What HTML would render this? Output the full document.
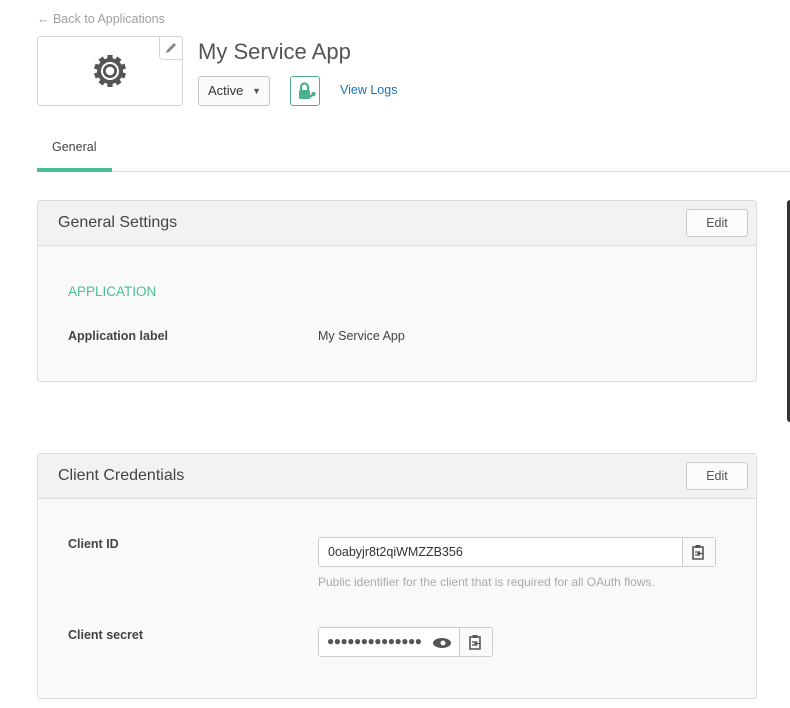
<!DOCTYPE html>
<html><head><meta charset="utf-8"><style>
*{box-sizing:border-box;margin:0;padding:0}
body{width:790px;height:708px;background:#fff;font-family:"Liberation Sans",sans-serif;position:relative;overflow:hidden;color:#3d3d3d}
.a{position:absolute}
.panel{position:absolute;left:37px;width:720px;border:1px solid #dcdcdc;border-radius:3px;background:#f9f9f9}
.ph{height:45px;background:#f2f2f2;border-bottom:1px solid #ddd;position:relative}
.ph h2{position:absolute;left:20px;top:13px;font-size:16px;font-weight:normal;color:#444}
.edit{position:absolute;right:8px;top:8px;width:62px;height:28px;border:1px solid #c8c8c8;border-radius:3px;background:#fbfbfb;font-size:12.5px;color:#555;text-align:center;line-height:26px}
.lbl{position:absolute;left:30px;font-size:12.5px;font-weight:bold;color:#444}
</style></head><body>
<div class="a" style="left:37px;top:12px;font-size:12.5px;color:#a0a0a0">← Back to Applications</div>
<div class="a" style="left:37px;top:36px;width:146px;height:70px;border:1px solid #d6d6d6;border-radius:3px">
 <div class="a" style="right:-1px;top:-1px;width:24px;height:24px;border:1px solid #d6d6d6;border-radius:0 3px 0 4px;background:#fff"></div>
 <svg class="a" style="right:4px;top:4px" width="14" height="14" viewBox="0 0 14 14"><path d="M2 12 L3 9 L10 2 L12 4 L5 11 Z" fill="#888"/></svg>
 <svg class="a" style="left:54px;top:16px" width="36" height="36" viewBox="0 0 36 36">
  <g fill="#555" transform="translate(18,18)">
   <circle r="13"/>
   <g id="t"><rect x="-2.6" y="-16" width="5.2" height="5"/></g>
   <use href="#t" transform="rotate(36)"/><use href="#t" transform="rotate(72)"/><use href="#t" transform="rotate(108)"/><use href="#t" transform="rotate(144)"/><use href="#t" transform="rotate(180)"/><use href="#t" transform="rotate(216)"/><use href="#t" transform="rotate(252)"/><use href="#t" transform="rotate(288)"/><use href="#t" transform="rotate(324)"/>
  </g>
  <circle cx="18" cy="18" r="9" fill="#fff"/><circle cx="18" cy="18" r="7" fill="#555"/><circle cx="18" cy="18" r="4.3" fill="#fff"/>
 </svg>
</div>
<div class="a" style="left:198px;top:39px;font-size:22px;color:#555">My Service App</div>
<div class="a" style="left:198px;top:76px;width:72px;height:30px;border:1px solid #c4c4c4;border-radius:3px;background:#fafafa;font-size:13px;line-height:28px;padding-left:9px;color:#333">Active<span style="position:absolute;right:8px;top:0;font-size:9px;color:#555">▼</span></div>
<div class="a" style="left:290px;top:76px;width:30px;height:30px;border:1px solid #4cb090;border-radius:3px;background:#fff">
 <svg width="28" height="28" viewBox="0 0 28 28"><path d="M10 13 V10 a3.5 3.5 0 0 1 7 0 V13" stroke="#4cb090" stroke-width="2.2" fill="none"/><rect x="8" y="13" width="11" height="9" rx="1.5" fill="#4cb090"/><path d="M17 21 L23 17" stroke="#4cb090" stroke-width="2.5"/><circle cx="22.5" cy="17" r="2.2" fill="#4cb090"/></svg>
</div>
<div class="a" style="left:340px;top:83px;font-size:12.5px;color:#1a73b8">View Logs</div>
<div class="a" style="left:52px;top:140px;font-size:12.5px;color:#444">General</div>
<div class="a" style="left:37px;top:168px;width:75px;height:4px;background:#4cbf98"></div>
<div class="a" style="left:112px;top:171px;width:678px;height:1px;background:#ddd"></div>
<div class="a" style="left:787px;top:200px;width:4px;height:222px;background:#333;border-radius:3px 0 0 3px"></div>

<div class="panel" style="top:200px;height:182px">
 <div class="ph"><h2>General Settings</h2><div class="edit">Edit</div></div>
 <div class="a" style="left:30px;top:83px;font-size:13.5px;color:#4cbf98">APPLICATION</div>
 <div class="lbl" style="top:128px">Application label</div>
 <div class="a" style="left:280px;top:128px;font-size:12.5px;color:#444">My Service App</div>
</div>

<div class="panel" style="top:453px;height:246px">
 <div class="ph"><h2>Client Credentials</h2><div class="edit">Edit</div></div>
 <div class="lbl" style="top:83px">Client ID</div>
 <div class="a" style="left:280px;top:83px;width:398px;height:30px;border:1px solid #ccc;border-radius:3px;background:#fff;font-size:12.5px;line-height:28px;padding-left:9px;color:#333">0oabyjr8t2qiWMZZB356
  <div class="a" style="right:0;top:0;width:33px;height:28px;border-left:1px solid #ccc;background:#fafafa"></div>
  <svg class="a" style="right:9px;top:6px" width="16" height="16" viewBox="0 0 16 16"><path d="M3 3 H13 V15 H3 Z" fill="none" stroke="#555" stroke-width="1.6"/><rect x="5.5" y="1" width="5" height="3" fill="#555"/><path d="M5 8 H9 M5 11 H9 M13 9.5 H8 M10 7.5 L8 9.5 L10 11.5" stroke="#555" stroke-width="1.3" fill="none"/></svg>
 </div>
 <div class="a" style="left:280px;top:121px;font-size:12px;color:#aaa">Public identifier for the client that is required for all OAuth flows.</div>
 <div class="lbl" style="top:174px">Client secret</div>
 <div class="a" style="left:280px;top:173px;width:175px;height:30px;border:1px solid #ccc;border-radius:3px;background:#fff;font-size:12px;line-height:27px;padding-left:8px;color:#555;letter-spacing:-0.5px">●●●●●●●●●●●●●●
  <svg class="a" style="left:113px;top:9px" width="20" height="12" viewBox="0 0 20 12"><ellipse cx="10" cy="6" rx="9" ry="5" fill="#555"/><circle cx="11" cy="6" r="2.5" fill="#fff"/></svg>
  <div class="a" style="right:0;top:0;width:33px;height:28px;border-left:1px solid #ccc;background:#fafafa"></div>
  <svg class="a" style="right:9px;top:6px" width="16" height="16" viewBox="0 0 16 16"><path d="M3 3 H13 V15 H3 Z" fill="none" stroke="#555" stroke-width="1.6"/><rect x="5.5" y="1" width="5" height="3" fill="#555"/><path d="M5 8 H9 M5 11 H9 M13 9.5 H8 M10 7.5 L8 9.5 L10 11.5" stroke="#555" stroke-width="1.3" fill="none"/></svg>
 </div>
</div>
</body></html>
